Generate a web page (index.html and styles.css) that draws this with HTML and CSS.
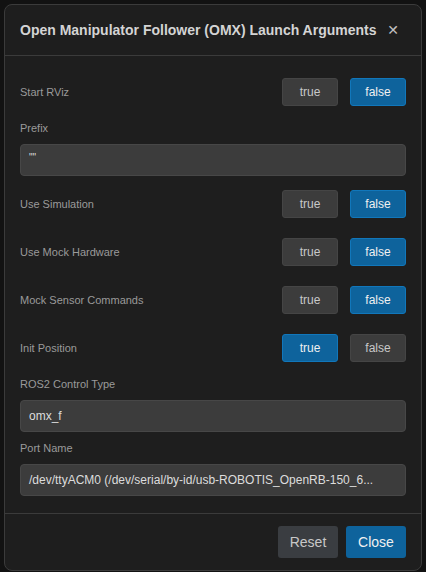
FILE: index.html
```html
<!DOCTYPE html>
<html lang="en">
<head>
<meta charset="utf-8">
<title>Launch Arguments</title>
<link rel="stylesheet" href="styles.css">
</head>
<body>
<div class="backdrop">
  <div class="dialog">
    <div class="dialog-header">
      <h2 class="dialog-title">Open Manipulator Follower (OMX) Launch Arguments</h2>
      <button class="close-x" aria-label="Close">&#x2715;</button>
    </div>
    <div class="dialog-body">
      <div class="toggle-row">
        <span class="field-label">Start RViz</span>
        <div class="toggle-group">
          <button class="tbtn">true</button>
          <button class="tbtn active">false</button>
        </div>
      </div>
      <div class="text-field">
        <label class="field-label block">Prefix</label>
        <div class="input small">""</div>
      </div>
      <div class="toggle-row">
        <span class="field-label">Use Simulation</span>
        <div class="toggle-group">
          <button class="tbtn">true</button>
          <button class="tbtn active">false</button>
        </div>
      </div>
      <div class="toggle-row">
        <span class="field-label">Use Mock Hardware</span>
        <div class="toggle-group">
          <button class="tbtn">true</button>
          <button class="tbtn active">false</button>
        </div>
      </div>
      <div class="toggle-row">
        <span class="field-label">Mock Sensor Commands</span>
        <div class="toggle-group">
          <button class="tbtn">true</button>
          <button class="tbtn active">false</button>
        </div>
      </div>
      <div class="toggle-row">
        <span class="field-label">Init Position</span>
        <div class="toggle-group">
          <button class="tbtn active">true</button>
          <button class="tbtn">false</button>
        </div>
      </div>
      <div class="text-field">
        <label class="field-label block">ROS2 Control Type</label>
        <div class="input">omx_f</div>
      </div>
      <div class="text-field">
        <label class="field-label block">Port Name</label>
        <div class="input">/dev/ttyACM0 (/dev/serial/by-id/usb-ROBOTIS_OpenRB-150_6...</div>
      </div>
    </div>
    <div class="dialog-footer">
      <button class="fbtn secondary">Reset</button>
      <button class="fbtn primary">Close</button>
    </div>
  </div>
</div>
</body>
</html>
```

FILE: styles.css
```css
* { box-sizing: border-box; }
html, body {
  margin: 0;
  padding: 0;
  background: #121212;
  font-family: "Liberation Sans", Arial, sans-serif;
}
.backdrop {
  padding: 4px 4px 1px 4px;
}
.dialog {
  background: #1e1e1e;
  border: 1px solid #3b3b3b;
  border-radius: 8px;
  overflow: hidden;
}
.dialog-header {
  height: 51px;
  display: flex;
  align-items: center;
  justify-content: space-between;
  padding: 0 16px 0 15px;
  border-bottom: 1px solid #3b3b3b;
}
.dialog-title {
  margin: 0;
  font-size: 14px;
  font-weight: bold;
  color: #d4d4d4;
  white-space: nowrap;
}
.close-x {
  width: 24px;
  height: 24px;
  padding: 0;
  border: none;
  background: transparent;
  color: #c0c0c0;
  font-size: 14px;
  font-family: "DejaVu Sans", sans-serif;
  cursor: pointer;
}
.dialog-body {
  padding: 16px 15px 17px 15px;
  display: flex;
  flex-direction: column;
  gap: 8px;
}
.toggle-row {
  height: 40px;
  display: flex;
  align-items: center;
  justify-content: space-between;
}
.field-label {
  font-size: 11px;
  color: #9a9a9a;
  line-height: 16px;
}
.field-label.block {
  display: block;
  margin-bottom: 8px;
}
.toggle-group {
  display: flex;
  gap: 12px;
}
.tbtn {
  width: 56px;
  height: 28px;
  border-radius: 3px;
  border: 1px solid #454545;
  background: #3c3c3c;
  color: #c8c8c8;
  font-family: "Liberation Sans", Arial, sans-serif;
  font-size: 12px;
  padding: 0;
}
.tbtn.active {
  background: #0e639c;
  border-color: #1177bb;
  color: #f0f0f0;
}
.input {
  height: 32px;
  line-height: 30px;
  background: #3c3c3c;
  border: 1px solid #474747;
  border-radius: 4px;
  padding: 0 8px 0 8px;
  color: #dcdcdc;
  font-size: 12px;
  white-space: nowrap;
  overflow: hidden;
}
.input.small {
  font-size: 10px;
  line-height: 26px;
}
.dialog-footer {
  border-top: 1px solid #3b3b3b;
  padding: 12px 15px;
  display: flex;
  justify-content: flex-end;
  gap: 8px;
}
.fbtn {
  min-width: 60px;
  height: 32px;
  padding: 0 10px;
  border-radius: 3px;
  border: none;
  font-family: "Liberation Sans", Arial, sans-serif;
  font-size: 14px;
}
.fbtn.secondary {
  background: #3a3d41;
  color: #c8c8c8;
}
.fbtn.primary {
  background: #0e639c;
  color: #f0f0f0;
}
```
